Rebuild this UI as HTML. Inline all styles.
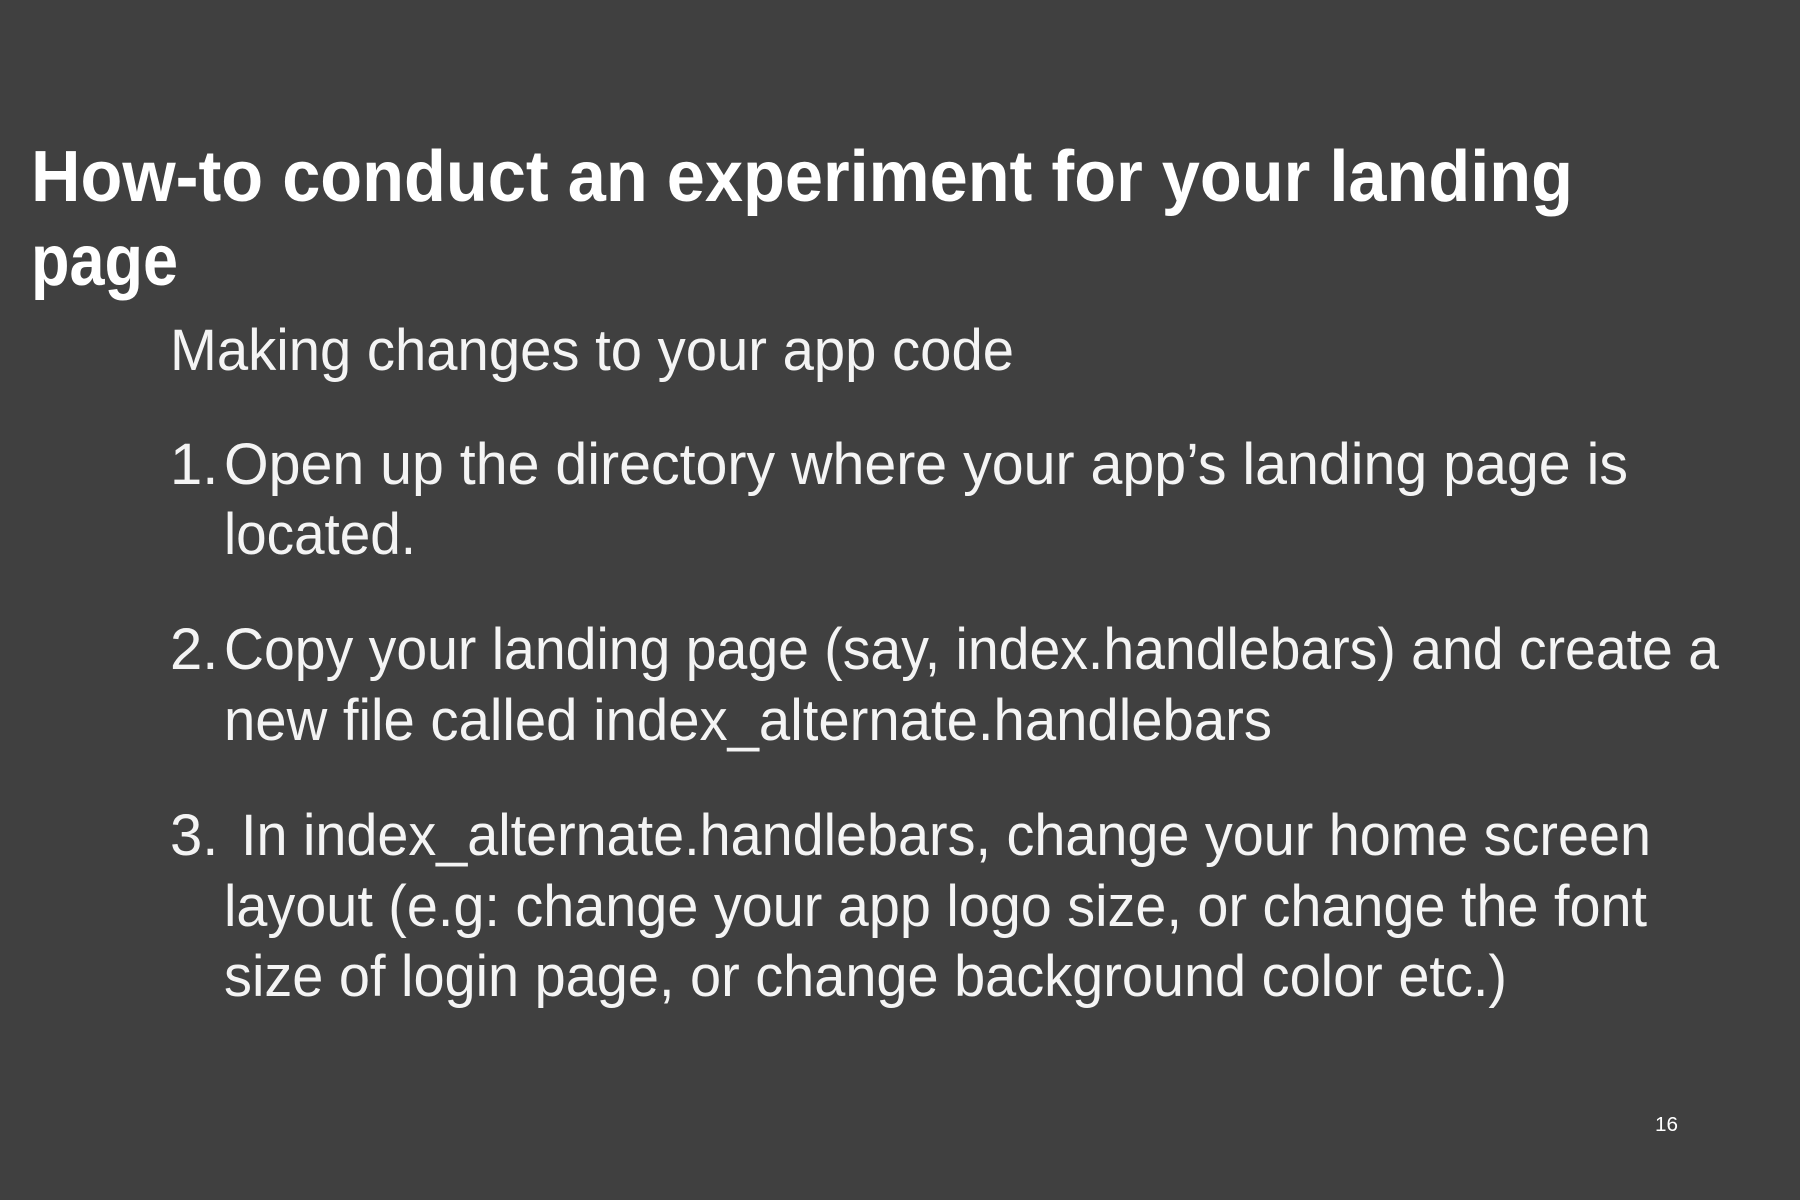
<!DOCTYPE html>
<html><head><meta charset="utf-8"><style>
html,body{margin:0;padding:0;background:#404040;}
svg{display:block}
text{font-family:"Liberation Sans",sans-serif;fill:#fff}
.b{font-weight:bold;font-size:72px}
.t{font-size:58px;fill:#f4f4f4}
</style></head><body>
<svg width="1800" height="1200" viewBox="0 0 1800 1200">
<rect width="1800" height="1200" fill="#404040"/>
<text class="b" x="31" y="201" textLength="1542" lengthAdjust="spacingAndGlyphs">How-to conduct an experiment for your landing</text>
<text class="b" x="31" y="285" textLength="147" lengthAdjust="spacingAndGlyphs">page</text>
<text class="t" x="170" y="370" textLength="844" lengthAdjust="spacingAndGlyphs">Making changes to your app code</text>
<text class="t" x="170" y="484">1.</text>
<text class="t" x="224" y="484" textLength="1404" lengthAdjust="spacingAndGlyphs">Open up the directory where your app’s landing page is</text>
<text class="t" x="224" y="554" textLength="192" lengthAdjust="spacingAndGlyphs">located.</text>
<text class="t" x="170" y="669">2.</text>
<text class="t" x="224" y="669" textLength="1495" lengthAdjust="spacingAndGlyphs">Copy your landing page (say, index.handlebars) and create a</text>
<text class="t" x="224" y="740" textLength="1048" lengthAdjust="spacingAndGlyphs">new file called index_alternate.handlebars</text>
<text class="t" x="170" y="855">3.</text>
<text class="t" x="241" y="855" textLength="1410" lengthAdjust="spacingAndGlyphs">In index_alternate.handlebars, change your home screen</text>
<text class="t" x="224" y="926" textLength="1423" lengthAdjust="spacingAndGlyphs">layout (e.g: change your app logo size, or change the font</text>
<text class="t" x="224" y="996" textLength="1283" lengthAdjust="spacingAndGlyphs">size of login page, or change background color etc.)</text>
<text x="1655" y="1131" style="font-size:20px" textLength="23" lengthAdjust="spacingAndGlyphs">16</text>
</svg>
</body></html>
